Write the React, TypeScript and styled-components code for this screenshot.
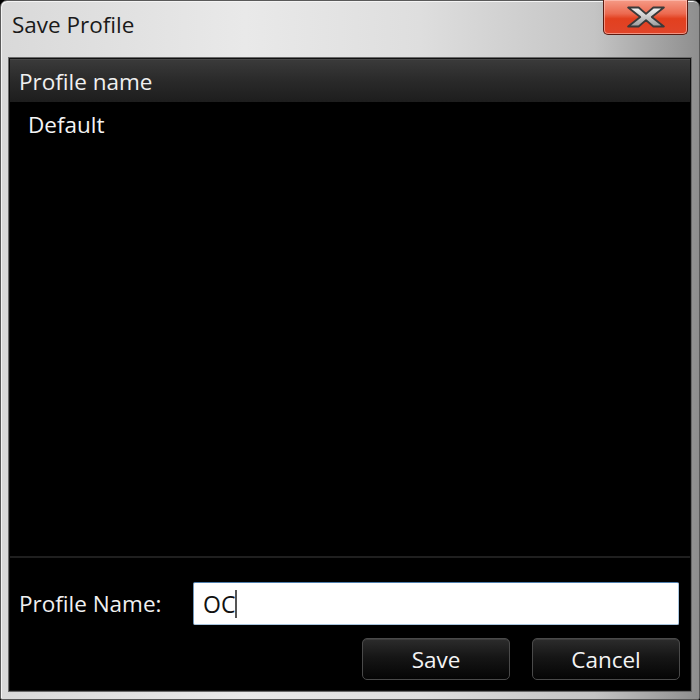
import React from "react";
import styled, { createGlobalStyle } from "styled-components";

const Global = createGlobalStyle`
  html, body { margin: 0; padding: 0; background: #000; }
  * { box-sizing: border-box; }
  body { font-family: "Segoe UI", "Open Sans", "Noto Sans", sans-serif; }
`;

const Window = styled.div`
  width: 700px;
  height: 700px;
  display: flex;
  flex-direction: column;
  padding: 0 8px 8px 8px;
  border-radius: 7px 7px 2px 2px;
  border: 1px solid #5a5a5a;
  background: linear-gradient(90deg, #d9d9d9 0%, #e9e9e9 35%, #dedede 60%, #c4c4c4 85%, #8e8e8e 100%);
  box-shadow: inset 1px 1px 0 #f4f4f4;
`;

const TitleBar = styled.div`
  height: 57px;
  display: flex;
  justify-content: space-between;
  align-items: flex-start;
`;

const Title = styled.div`
  margin-top: 10px;
  margin-left: 3px;
  font-size: 22.5px;
  line-height: 28px;
  color: #1a1a1a;
`;

const CloseButton = styled.button`
  width: 85px;
  height: 35px;
  margin-top: -1px;
  margin-right: 3px;
  padding: 0;
  display: flex;
  align-items: center;
  justify-content: center;
  border: 1px solid #5a1a10;
  border-top: none;
  border-radius: 0 0 5px 5px;
  background: linear-gradient(180deg, #f59a86 0%, #ec6a50 40%, #e2401f 55%, #e0452a 100%);
  box-shadow: inset 0 0 0 1px rgba(255, 200, 190, 0.6);
`;

const Content = styled.div`
  flex: 1;
  display: flex;
  flex-direction: column;
  background: #000;
  border: 1px solid #111;
  box-shadow: 0 0 0 1px #6a6a6a;
`;

const ListHeader = styled.div`
  height: 43px;
  display: flex;
  align-items: center;
  padding-left: 9px;
  font-size: 22.5px;
  color: #f0f0f0;
  background: linear-gradient(180deg, #3a3a3a 0%, #2b2b2b 45%, #1d1d1d 100%);
  border-top: 1px solid #4a4a4a;
`;

const List = styled.div`
  flex: 1;
  display: flex;
  flex-direction: column;
`;

const ListRow = styled.div`
  height: 44px;
  display: flex;
  align-items: center;
  padding-left: 18px;
  font-size: 22.5px;
  color: #f4f4f4;
`;

const Separator = styled.div`
  height: 2px;
  background: #1f1f1f;
`;

const Footer = styled.div`
  display: flex;
  flex-direction: column;
  gap: 13px;
  padding: 24px 10px 10px 9px;
`;

const FormRow = styled.div`
  display: grid;
  grid-template-columns: 174px 1fr;
  align-items: center;
  padding-right: 1px;
`;

const Label = styled.label`
  font-size: 22.5px;
  color: #f0f0f0;
`;

const InputBox = styled.div`
  height: 43px;
  display: flex;
  align-items: center;
  padding-left: 9px;
  background: #fff;
  border: 1px solid #a9c5de;
  border-top-color: #4f7fae;
  border-left-color: #6f97bd;
  border-radius: 2px;
  font-size: 23px;
  color: #111;
`;

const Caret = styled.span`
  display: inline-block;
  width: 2px;
  height: 28px;
  background: #555;
`;

const ButtonRow = styled.div`
  display: flex;
  justify-content: flex-end;
  gap: 22px;
`;

const Button = styled.button`
  width: 148px;
  height: 42px;
  padding: 0;
  font-family: inherit;
  font-size: 22.5px;
  color: #f4f4f4;
  border: 1px solid #4a4a4a;
  border-radius: 5px;
  background: linear-gradient(180deg, #2c2c2c 0%, #161616 45%, #050505 100%);
  box-shadow: inset 0 1px 0 #3c3c3c;
`;

const CloseGlyph = () => (
  <svg width="42" height="24" viewBox="0 0 40 22">
    <defs>
      <linearGradient id="xg" x1="0" y1="0" x2="0" y2="1">
        <stop offset="0" stopColor="#f4f4f4" />
        <stop offset="0.5" stopColor="#c9c9c9" />
        <stop offset="1" stopColor="#9a9a9a" />
      </linearGradient>
    </defs>
    <path
      d="M3 2 H13 L20 8 L27 2 H37 L25.5 11 L37 20 H27 L20 14 L13 20 H3 L14.5 11 Z"
      fill="url(#xg)"
      stroke="#3a3a3a"
      strokeWidth="1.8"
      strokeLinejoin="round"
    />
  </svg>
);

export default function App() {
  return (
    <>
      <Global />
      <Window>
        <TitleBar>
          <Title>Save Profile</Title>
          <CloseButton aria-label="Close">
            <CloseGlyph />
          </CloseButton>
        </TitleBar>
        <Content>
          <ListHeader>Profile name</ListHeader>
          <List>
            <ListRow>Default</ListRow>
          </List>
          <Separator />
          <Footer>
            <FormRow>
              <Label>Profile Name:</Label>
              <InputBox>
                OC
                <Caret />
              </InputBox>
            </FormRow>
            <ButtonRow>
              <Button>Save</Button>
              <Button>Cancel</Button>
            </ButtonRow>
          </Footer>
        </Content>
      </Window>
    </>
  );
}
